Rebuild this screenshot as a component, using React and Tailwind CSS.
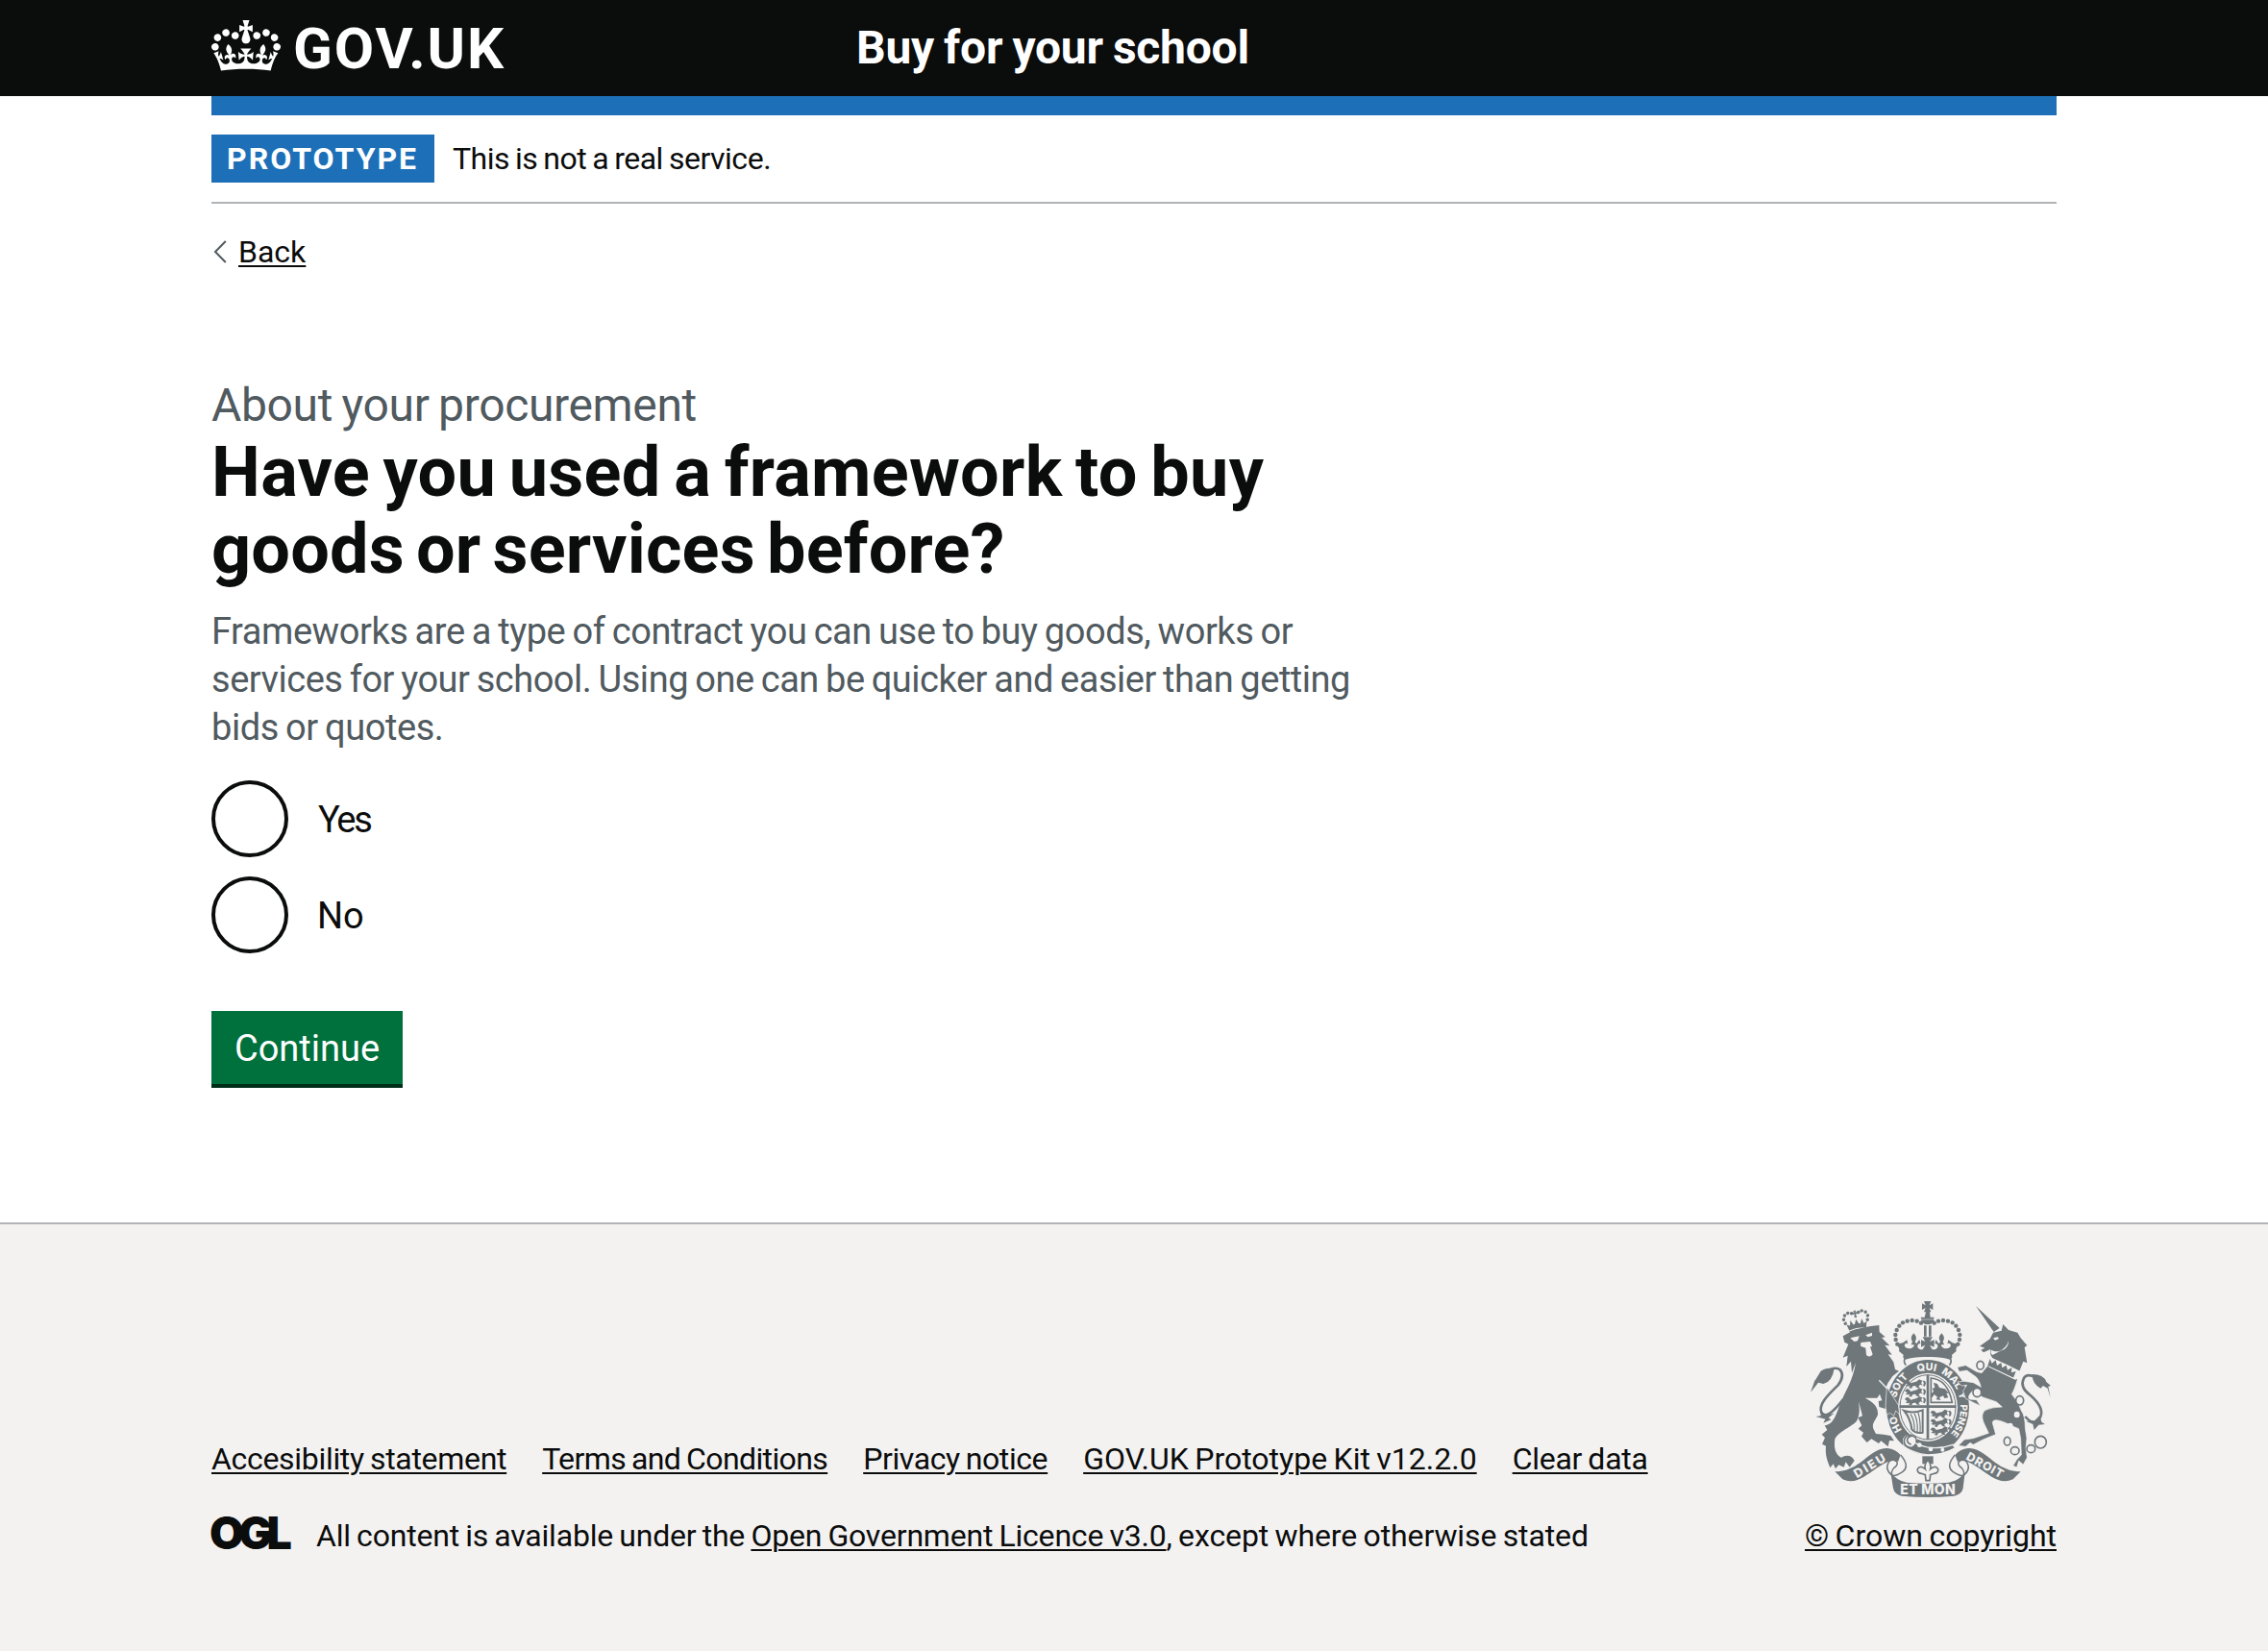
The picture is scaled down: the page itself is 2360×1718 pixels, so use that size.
const GREY = "#6f777b";
const PAPER = "#f3f2f1";

function Crown() {
  return (
    <svg viewBox="0 0 132 97" className="mb-[5px] h-[53px] w-[72px]" fill="currentColor" fillRule="evenodd" aria-hidden="true">
      <path d="M25 30.2c3.5 1.5 7.7-.2 9.1-3.7 1.5-3.6-.2-7.8-3.9-9.2-3.6-1.4-7.6.3-9.1 3.9-1.4 3.5.3 7.5 3.9 9zM9 39.5c3.6 1.5 7.8-.2 9.2-3.7 1.5-3.6-.2-7.8-3.9-9.1-3.6-1.5-7.6.2-9.1 3.8-1.4 3.5.3 7.5 3.8 9zM4.4 57.2c3.5 1.5 7.7-.2 9.1-3.8 1.5-3.6-.2-7.7-3.9-9.1-3.5-1.5-7.6.3-9.1 3.8-1.4 3.5.3 7.6 3.9 9.1zm38.3-21.4c3.5 1.5 7.7-.2 9.1-3.8 1.5-3.6-.2-7.7-3.9-9.1-3.6-1.5-7.6.3-9.1 3.8-1.3 3.6.4 7.7 3.9 9.1zm64.4-5.6c-3.6 1.5-7.8-.2-9.1-3.7-1.5-3.6.2-7.8 3.8-9.2 3.6-1.4 7.7.3 9.2 3.9 1.3 3.5-.4 7.5-3.9 9zm15.9 9.3c-3.6 1.5-7.7-.2-9.1-3.7-1.5-3.6.2-7.8 3.7-9.1 3.6-1.5 7.7.2 9.2 3.8 1.5 3.5-.3 7.5-3.8 9zm4.7 17.7c-3.6 1.5-7.8-.2-9.2-3.8-1.5-3.6.2-7.7 3.9-9.1 3.6-1.5 7.7.3 9.2 3.8 1.3 3.5-.4 7.6-3.9 9.1zM89.3 35.8c-3.6 1.5-7.8-.2-9.2-3.8-1.4-3.6.2-7.7 3.9-9.1 3.6-1.5 7.7.3 9.2 3.8 1.4 3.6-.3 7.7-3.9 9.1zM69.7 17.7l8.9 4.7V9.3l-8.9 2.8c-.2-.3-.5-.6-.9-.9L72.4 0H59.6l3.5 11.2c-.3.3-.6.5-.9.9l-8.8-2.8v13.1l8.8-4.7c.3.3.6.7.9.9l-5 15.4v.1c-.2.8-.4 1.6-.4 2.4 0 4.1 3.1 7.5 7 8.1h.2c.3 0 .7.1 1 .1.4 0 .7 0 1-.1h.2c4-.6 7.1-4.1 7.1-8.1 0-.8-.1-1.7-.4-2.4V34l-5.1-15.4c.4-.2.7-.6 1-.9zM66 92.8c16.9 0 32.8 1.1 47.1 3.2 4-16.9 8.9-26.7 14-33.5l-9.6-3.4c1 4.9 1.1 7.2 0 10.2-1.5-1.4-3-4.3-4.2-8.7L108.6 76c2.8-2 5-3.2 7.5-3.3-4.4 9.4-10 11.9-13.6 11.2-4.3-.8-6.3-4.6-5.6-7.9 1-4.7 5.7-5.9 8-.5 4.3-8.7-3-11.4-7.6-8.8 7.1-7.2 7.9-13.5 2.1-21.1-8 6.1-8.1 12.3-4.5 20.8-4.7-5.4-12.1-2.5-9.5 6.2 3.4-5.2 7.9-2 7.2 3.1-.6 4.3-6.4 7.8-13.5 7.2-10.3-.9-10.9-8-11.2-13.8 2.5-.5 7.1 1.8 11 7.3L80.2 60c-4.1 4.4-8 5.3-12.3 5.4 1.4-4.4 8-11.6 8-11.6H55.5s6.4 7.2 7.9 11.6c-4.2-.1-8-1-12.3-5.4l1.4 16.4c3.9-5.5 8.5-7.7 10.9-7.3-.3 5.8-.9 12.8-11.1 13.8-7.2.6-12.9-2.9-13.5-7.2-.7-5 3.8-8.3 7.1-3.1 2.7-8.7-4.6-11.6-9.4-6.2 3.7-8.5 3.6-14.7-4.6-20.8-5.8 7.6-5 13.9 2.2 21.1-4.7-2.6-11.9.1-7.7 8.8 2.3-5.5 7.1-4.2 8.1.5.7 3.3-1.3 7.1-5.7 7.9-3.5.7-9-1.8-13.5-11.2 2.5.1 4.7 1.3 7.5 3.3l-4.7-15.4c-1.2 4.4-2.7 7.2-4.3 8.7-1.1-3-.9-5.3 0-10.2l-9.5 3.4c5 6.9 9.9 16.7 14 33.5 14.8-2.1 30.8-3.2 47.7-3.2z" />
    </svg>
  );
}

const ARCH = [[343, 206], [338, 192], [337, 177], [341, 162], [349, 149], [360, 139], [374, 134], [389, 132], [404, 134], [417, 140]];
const BUBBLES = [[602, 272, 11, 13], [592, 357, 13, 14], [725, 382, 12, 14], [686, 509, 10, 13], [710, 539, 13, 12], [760, 533, 13, 12], [790, 512, 18, 19]];
const STUDS = [[716, 426], [695, 462]];

function HalfCrown() {
  return (
    <g>
      {ARCH.map(([x, y]) => <circle key={x} cx={x} cy={y} r="6.6" />)}
      <path d="M337 206Q352 216 348 228L366 243Q400 226 438 226V212C428 224 416 227 408 218C403 211 408 202 415 205L412 192L403 204C398 201 393 204 395 212C388 222 372 222 366 213C364 205 371 200 376 206L373 193L360 202Z" />
      <path d="M394 172Q381 186 390 198L386 208H402L398 198Q407 186 394 172Z" />
      <path d="M362 240Q400 222 438 224V246Q398 244 368 254Q358 250 362 240Z" />
      <path d="M368 248Q360 262 370 272" fill="none" stroke={GREY} strokeWidth="5" />
    </g>
  );
}

function Lions({ x, y }) {
  return (
    <g transform={`translate(${x} ${y}) scale(.94)`} fill={GREY}>
      {[0, 28, 56].map((dy) => (
        <path key={dy} d={`M2 ${dy + 8}l7 -7l8 3l5 6l20 -5l8 -7l10 4l-3 8l5 8l-8 -3l-6 6l5 5l-10 0l-6 -7l-9 2l-3 7l-10 -2l5 -6l-8 1l-8 -3l7 -3zM60 ${dy + 2}q9 6 3 16l4 4q10 -12 1 -20z`} />
      ))}
    </g>
  );
}

function Ribbon() {
  return (
    <g>
      <path d="M148 604C185 604 215 588 245 562C270 541 290 530 312 531Q338 534 353 552L356 576Q338 568 318 572C282 584 255 616 218 630Q195 638 172 628Z" fill={GREY} />
      <path d="M353 552C372 574 376 592 360 604C345 614 330 622 322 612C310 600 306 588 318 572C332 562 352 574 338 588C328 594 322 606 328 620" fill={PAPER} stroke={GREY} strokeWidth="4.5" />
    </g>
  );
}

function RoyalArms() {
  return (
    <svg viewBox="72 72 750 612" className="h-[204px] w-[250px]" fill={GREY} fontFamily="Inter, sans-serif" fontWeight="800" role="img" aria-label="Royal coat of arms">
      {/* crown */}
      <path d="M426 72h22l-5 13l11 -6v20l-11 -6l5 13h-22l5 -13l-11 6v-20l11 6zM432 106h12l2 16h12l-2 6h-38l-2 -6h12zM417 130h41q-4 15 -20 15q-17 0 -21 -15zM426 148h8v34h-8zM441 148h8v34h-8zM422 184h31l-9 14l14 -5v22l-14 -6l8 14h-30l8 -14l-13 6v-22l13 5z" />
      <HalfCrown />
      <g transform="translate(875 0) scale(-1 1)"><HalfCrown /></g>

      {/* lion */}
      <g transform="rotate(-10 215 135)">
        {[[180, 136], [177, 123], [182, 111], [193, 105], [204, 108], [226, 108], [237, 105], [248, 111], [253, 123], [250, 136]].map(([x, y]) => <circle key={`${x}`} cx={x} cy={y} r="5.2" />)}
        <path d="M211 101h8l-2 6l6 -2v8l-6 -2l2 12h-8l2 -12l-6 2v-8l6 2zM183 140l10 5l4 -16l7 15l5 -2l6 -14l6 14l5 2l7 -15l4 16l10 -5l-5 19q-27 -7 -54 0zM188 162q27 -7 54 0l-1 6q-26 -6 -52 0z" />
      </g>
      <path d="M173 181L190 172Q232 150 286 147L287 168L305 184L294 186L319 211L304 209L326 239L314 238L331 262L336 285L348 290L328 306L314 326L307 342L345 394L350 425L338 412L332 430L320 421L310 427L306 408L286 402L284 384L295 382L288 362L280 374L242 374C266 386 284 400 282 426C276 444 262 452 268 470L276 486L300 488L322 492L333 508L318 507L314 526L292 508L285 516L262 502L248 513L231 494L237 482L221 470L232 460L220 436L234 430L222 385C224 402 228 424 216 446C198 466 160 478 148 502C144 530 150 552 168 560C182 550 202 552 209 570L194 590L182 574L176 590L160 583L150 595L143 580L133 592C125 570 117 555 120 524L108 518L117 498L107 488L124 474L116 460C148 456 152 420 168 385C184 345 204 320 213 264L201 296L198 260L184 276L188 242L173 248L190 206L178 200Z" />
      <path d="M196 187L224 181L219 196L208 198ZM244 178L264 170L264 180L251 184ZM229 201L258 198L264 212L258 215L266 238Q257 250 246 240L244 218L228 212Z" fill={PAPER} />
      <path d="M286 319L343 378" fill="none" stroke={PAPER} strokeWidth="4" />
      <path d="M120 292Q148 274 164 286Q180 304 158 334C136 356 94 392 106 420Q122 446 174 378" fill="none" stroke={GREY} strokeWidth="8" />
      <path d="M72 356L86 318L100 316L82 326L104 290Q120 278 146 282Q140 324 112 330L96 326Q84 342 72 356ZM104 408Q110 432 146 422L128 436L136 442L112 452L118 440L88 432L104 430Z" />

      {/* garter and shield */}
      <ellipse cx="438" cy="403" rx="132" ry="151" fill={PAPER} />
      <ellipse cx="438" cy="403" rx="129" ry="148" />
      <ellipse cx="438" cy="403" rx="93" ry="107" fill={PAPER} />
      <ellipse cx="438" cy="403" rx="87" ry="101" fill="none" stroke={GREY} strokeWidth="3" />
      <path id="motto" d="M438 518A102 115 0 0 1 438 288A102 115 0 0 1 438 518" fill="none" />
      <g fill={PAPER} fontSize="32" textAnchor="middle">
        <text><textPath href="#motto" startOffset="17.5%">HO</textPath></text>
        <text><textPath href="#motto" startOffset="34.8%">SOIT</textPath></text>
        <text><textPath href="#motto" startOffset="49.5%">QUI</textPath></text>
        <text><textPath href="#motto" startOffset="61.5%">MAL</textPath></text>
        <text><textPath href="#motto" startOffset="70%">Y</textPath></text>
        <text fontSize="30"><textPath href="#motto" startOffset="81%">PENSE</textPath></text>
      </g>
      <path d="M350 397h176v8h-176zM434 303h8v200h-8z" />
      <Lions x={364} y={318} />
      <Lions x={444} y={412} />
      <path d="M448 312Q500 316 514 388H448Z" fill="none" stroke={GREY} strokeWidth="5" />
      <path d="M456 326l12 4l6 12l18 4l12 14l-8 -1l6 14l-12 2l-4 -8l-12 6l4 8l-14 -2l4 -8l-10 -8l-6 10l-6 -8l10 -12l-4 -8l8 -4z" />
      <path d="M364 414Q392 424 422 412V482Q400 486 388 472Q384 438 364 414Z" fill="none" stroke={GREY} strokeWidth="6" />
      <path d="M384 424Q398 446 396 476M396 422Q408 446 405 480M408 420Q416 446 414 482" fill="none" stroke={GREY} strokeWidth="3.5" />
      <path d="M370 498Q438 548 516 520L524 530Q486 552 438 552Q392 546 362 524Z" stroke={PAPER} strokeWidth="4" />
      <circle cx="380" cy="508" r="20" fill={PAPER} />
      <path d="M388 490Q366 488 364 508Q364 528 386 530M402 500Q390 486 376 498Q368 512 386 520" fill="none" stroke={GREY} strokeWidth="5" />
      <g fill={PAPER}><circle cx="412" cy="521" r="7" /><circle cx="447" cy="534" r="7" /><circle cx="484" cy="536" r="6" /></g>

      {/* lion's forepaw over the garter */}
      <path d="M310 340L346 396L350 425L338 414L332 430L320 421L310 427L306 400Z" stroke={PAPER} strokeWidth="2" />

      {/* unicorn */}
      <path d="M588 87L662 156L644 168ZM600 212L632 190L642 170L668 164L673 144L690 162L718 170L728 187L748 210L740 216L748 265L736 260L724 290L690 272L640 250Q630 236 634 222L612 232L604 224L616 218Z" />
      <path d="M642 187l14 -3l4 5l-12 5zM690 194q2 24 -22 32l-28 14q-8 -6 -4 -16q22 12 40 -6q12 -10 14 -24z" fill={PAPER} />
      <path d="M628 270L718 316Q708 350 700 362Q722 388 730 414Q742 430 742 468L747 500L744 530L748 560L736 582L722 570L716 590L704 586L716 566L730 552L728 500L722 470Q700 462 682 452Q640 434 640 452L650 488Q610 502 580 520L570 514L556 526L534 523L552 504L580 500L628 484L612 450Q602 424 618 412Q640 402 670 402L652 386Q634 380 610 372L578 352Q560 370 568 378L590 380L602 398L588 392L576 386L556 376L548 352L560 334L544 336L530 324L550 322L580 326L604 340Q596 310 582 304L560 288L536 292L530 278L556 272L590 292L606 296Z" stroke={PAPER} strokeWidth="2" />
      <path d="M630 246L726 290L712 318L624 272Z" fill={PAPER} />
      <path d="M632 252l6 14l12 -10l4 17l13 -9l3 16l13 -8l4 15l13 -8l-1 16l14 -4l-8 20l-80 -38z" />
      <path d="M628 276L708 314" stroke={PAPER} strokeWidth="3" />
      <g stroke={GREY} strokeWidth="5" fill={PAPER}>{BUBBLES.map(([x, y, rx, ry]) => <ellipse key={x} cx={x} cy={y} rx={rx} ry={ry} />)}</g>
      <g fill={PAPER}>{STUDS.map(([x, y]) => <ellipse key={x} cx={x} cy={y} rx="9" ry="10" />)}</g>
      <path d="M774 310Q748 296 738 312Q724 340 756 364C784 388 804 414 786 440Q768 462 742 432" fill="none" stroke={GREY} strokeWidth="8" />
      <path d="M821 374L812 344L798 336L790 344Q764 330 764 300Q800 300 808 324L822 336L814 338ZM786 430L794 450L804 456L784 458L770 474L766 456L744 446L770 446Z" />

      {/* motto scroll and fleur-de-lis */}
      <path d="M421 556h34v24h-34z" />
      <path d="M438 566Q450 582 446 596Q462 582 470 596Q472 608 458 610L446 614L444 632H432L430 614L418 610Q404 608 406 596Q414 582 430 596Q426 582 438 566Z" fill={PAPER} stroke={GREY} strokeWidth="5" />
      <Ribbon />
      <g transform="translate(876 0) scale(-1 1)"><Ribbon /></g>
      <path d="M322 606Q340 632 372 638Q438 644 504 638Q536 632 554 606L548 656Q544 674 520 680Q438 688 356 680Q334 674 330 656Z" />
      <g fill={PAPER} textAnchor="middle">
        <text fontSize="38" transform="translate(263 597) rotate(-31)" textLength="108">DIEU</text>
        <text fontSize="42" x="438" y="675" textLength="172">ET MON</text>
        <text fontSize="37" transform="translate(610 595) rotate(29)" textLength="126">DROIT</text>
      </g>
    </svg>
  );
}

const LINK = "underline decoration-2 underline-offset-[3px] [word-spacing:-1.5px]";

function Radio({ label, className }) {
  return (
    <label className="flex items-center">
      <span className="size-20 rounded-full border-4 border-[#0b0c0c] bg-white" />
      <span className={`mt-0.5 text-[38px] leading-[50px] ${className}`}>{label}</span>
    </label>
  );
}

export default function App() {
  return (
    <div className="flex min-h-[1718px] flex-col bg-white text-[32px] leading-10 text-[#0b0c0c] [font-family:Roboto,sans-serif]">
      <header className="h-[100px] bg-[#0b0c0c] text-white">
        <div className="mx-auto flex h-full w-[1920px] items-center font-bold">
          <div className="flex w-[671px] items-center">
            <Crown />
            <span className="mt-0.5 ml-[13px] text-[60px] leading-none tracking-[1.9px]">GOV.UK</span>
          </div>
          <span className="text-[48px] leading-none tracking-[-0.25px] [word-spacing:-1.5px]">Buy for your school</span>
        </div>
      </header>

      <div className="mx-auto w-[1920px] flex-1">
        <div className="h-5 bg-[#1d70b8]" />
        <div className="flex h-[92px] items-center border-b-2 border-[#b1b4b6]">
          <strong className="h-[50px] w-[232px] bg-[#1d70b8] pl-4 leading-[50px] tracking-[2px] text-white">PROTOTYPE</strong>
          <span className="ml-[19px] tracking-[-0.48px] [word-spacing:-1.5px]">This is not a real service.</span>
        </div>
        <a className="mt-[30px] flex h-10 items-center">
          <svg viewBox="0 0 14 24" className="ml-[2px] h-6 w-[14px]" fill="none" stroke="#505a5f" strokeWidth="2"><path d="M12.8 1L2 12l10.8 11" /></svg>
          <span className="ml-3 underline decoration-2 underline-offset-[3px]">Back</span>
        </a>

        <main className="mt-[110px]">
          <p className="text-[48px] leading-[60px] tracking-[-0.36px] text-[#505a5f] [word-spacing:-2px]">About your procurement</p>
          <h1 className="text-[72px] leading-[80px] font-bold">
            <span className="block tracking-[0.3px] [word-spacing:-4.6px]">Have you used a framework to buy</span>
            <span className="block tracking-[0.2px] [word-spacing:-6px]">goods or services before?</span>
          </h1>
          <p className="mt-5 text-[38px] leading-[50px] text-[#505a5f] [word-spacing:-1.8px]">
            <span className="block tracking-[-0.44px]">Frameworks are a type of contract you can use to buy goods, works or</span>
            <span className="block tracking-[-0.47px]">services for your school. Using one can be quicker and easier than getting</span>
            <span className="block tracking-[-0.43px]">bids or quotes.</span>
          </p>
          <div className="mt-[30px] flex flex-col gap-5">
            <Radio label="Yes" className="ml-[31px] tracking-[-2.3px]" />
            <Radio label="No" className="ml-[30px]" />
          </div>
          <button className="mt-[60px] block h-20 w-[199px] border-b-4 border-[#002d18] bg-[#00703c] pt-0.5 text-[38px] text-white">Continue</button>
        </main>
      </div>

      <footer className="h-[446px] border-t-2 border-[#b1b4b6] bg-[#f3f2f1] pt-20">
        <div className="mx-auto flex w-[1920px] items-end justify-between">
          <div className="flex flex-col gap-10 whitespace-nowrap">
            <nav className="flex gap-[37px]">
              <a className={`${LINK} tracking-[-0.31px]`}>Accesibility statement</a>
              <a className={`${LINK} tracking-[-0.61px]`}>Terms and Conditions</a>
              <a className={`${LINK} tracking-[-0.41px]`}>Privacy notice</a>
              <a className={LINK}>GOV.UK Prototype Kit v12.2.0</a>
              <a className={`${LINK} tracking-[-0.26px]`}>Clear data</a>
            </nav>
            <div className="flex h-10">
              <span className="-ml-[2px] w-[111px] text-[46.5px] leading-[34px] font-black tracking-[-5.8px] [font-family:Inter,sans-serif]">OGL</span>
              <p className="tracking-[-0.2px] [word-spacing:-1.5px]">
                All content is available under the <a className="underline decoration-2 underline-offset-[3px]">Open Government Licence v3.0</a><span className="tracking-[-0.1px]">, except where otherwise stated</span>
              </p>
            </div>
          </div>
          <div className="flex flex-col items-center gap-5">
            <RoyalArms />
            <a className={LINK}>© Crown copyright</a>
          </div>
        </div>
      </footer>
    </div>
  );
}
